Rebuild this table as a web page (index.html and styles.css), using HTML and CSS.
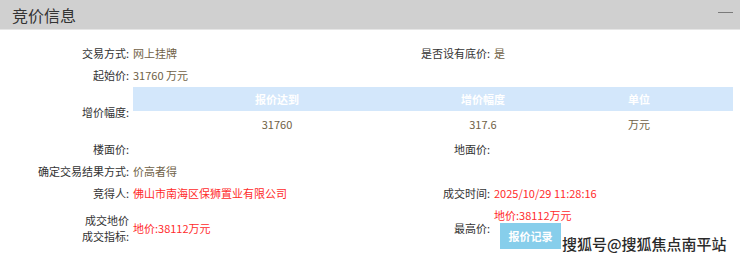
FILE: index.html
```html
<!DOCTYPE html>
<html lang="zh-CN">
<head>
<meta charset="utf-8">
<title>竞价信息</title>
<link rel="stylesheet" href="styles.css">
</head>
<body>
<div class="panel">
  <div class="panel-head">
    <span class="panel-title">竞价信息</span>
    <span class="collapse" aria-label="收起"></span>
  </div>
  <div class="info">
    <div class="lbl">交易方式:</div>
    <div class="val">网上挂牌</div>
    <div class="lbl">是否设有底价:</div>
    <div class="val">是</div>

    <div class="lbl">起始价:</div>
    <div class="val">31760 万元</div>
    <div class="lbl"></div>
    <div class="val"></div>

    <div class="lbl">增价幅度:</div>
    <div class="span3">
      <table class="inc">
        <colgroup><col class="c1"><col class="c2"><col class="c3"></colgroup>
        <thead><tr><th>报价达到</th><th>增价幅度</th><th>单位</th></tr></thead>
        <tbody><tr><td>31760</td><td>317.6</td><td>万元</td></tr></tbody>
      </table>
    </div>

    <div class="lbl">楼面价:</div>
    <div class="val"></div>
    <div class="lbl">地面价:</div>
    <div class="val"></div>

    <div class="lbl">确定交易结果方式:</div>
    <div class="val">价高者得</div>
    <div class="lbl"></div>
    <div class="val"></div>

    <div class="lbl">竞得人:</div>
    <div class="val red">佛山市南海区保狮置业有限公司</div>
    <div class="lbl">成交时间:</div>
    <div class="val red">2025/10/29 11:28:16</div>

    <div class="lbl two">成交地价<br>成交指标:</div>
    <div class="val red">地价:38112万元</div>
    <div class="lbl">最高价:</div>
    <div class="val">
      <div class="red">地价:38112万元</div>
      <button class="btn" type="button">报价记录</button>
    </div>
  </div>
  <div class="watermark">搜狐号@搜狐焦点南平站</div>
</div>
</body>
</html>
```

FILE: styles.css
```css
html, body {
  margin: 0;
  padding: 0;
  background: #fff;
}
body {
  font-family: "Noto Sans CJK SC", "Microsoft YaHei", "Noto Sans", sans-serif;
  font-size: 11px;
  color: #333;
}
.panel {
  position: relative;
  width: 740px;
  height: 262px;
  overflow: hidden;
}
.panel-head {
  height: 30px;
  background: #d0d0d0;
  border-bottom: 1px solid #e6e6e6;
  display: flex;
  align-items: center;
  justify-content: space-between;
  padding: 0 7px 0 12px;
  box-sizing: border-box;
}
.panel-title {
  font-size: 16px;
  line-height: 20px;
  color: #333;
}
.collapse {
  width: 15px;
  height: 1px;
  background: #7a7a7a;
  margin-bottom: 4px;
}
.info {
  display: grid;
  grid-template-columns: 129px 227px 126px 1fr;
  grid-template-rows: 22px 22px 52px 22px 22px 22px 48px;
  column-gap: 4px;
  align-items: center;
  padding: 12px 7px 0 0;
  line-height: 16px;
}
.lbl {
  text-align: right;
  color: #333;
  white-space: nowrap;
}
.val {
  color: #6f5f46;
  white-space: nowrap;
}
.red {
  color: #ff2b2b;
}
.span3 {
  grid-column: 2 / 5;
}
.inc {
  width: 600px;
  border-collapse: collapse;
  table-layout: fixed;
}
.inc .c1 { width: 288px; }
.inc .c2 { width: 124px; }
.inc .c3 { width: 188px; }
.inc th {
  height: 24px;
  padding: 0;
  background: #d3e7fb;
  color: #fff;
  font-weight: bold;
  text-align: center;
}
.inc td {
  height: 26px;
  padding: 0;
  color: #6f5f46;
  text-align: center;
}
.btn {
  display: block;
  margin: 0 0 0 6px;
  width: 61px;
  height: 26px;
  padding: 0;
  border: 0;
  background: #87ceeb;
  color: #fff;
  font-family: inherit;
  font-size: 11px;
  font-weight: bold;
}
.watermark {
  position: absolute;
  left: 562px;
  top: 234px;
  font-size: 15px;
  line-height: 20px;
  font-weight: 500;
  color: #2a2a2a;
  text-shadow: -1px -1px 0 #fff, 1px -1px 0 #fff, -1px 1px 0 #fff, 1px 1px 0 #fff, 0 1px 0 #fff, 0 -1px 0 #fff, 1px 0 0 #fff, -1px 0 0 #fff;
}
```
